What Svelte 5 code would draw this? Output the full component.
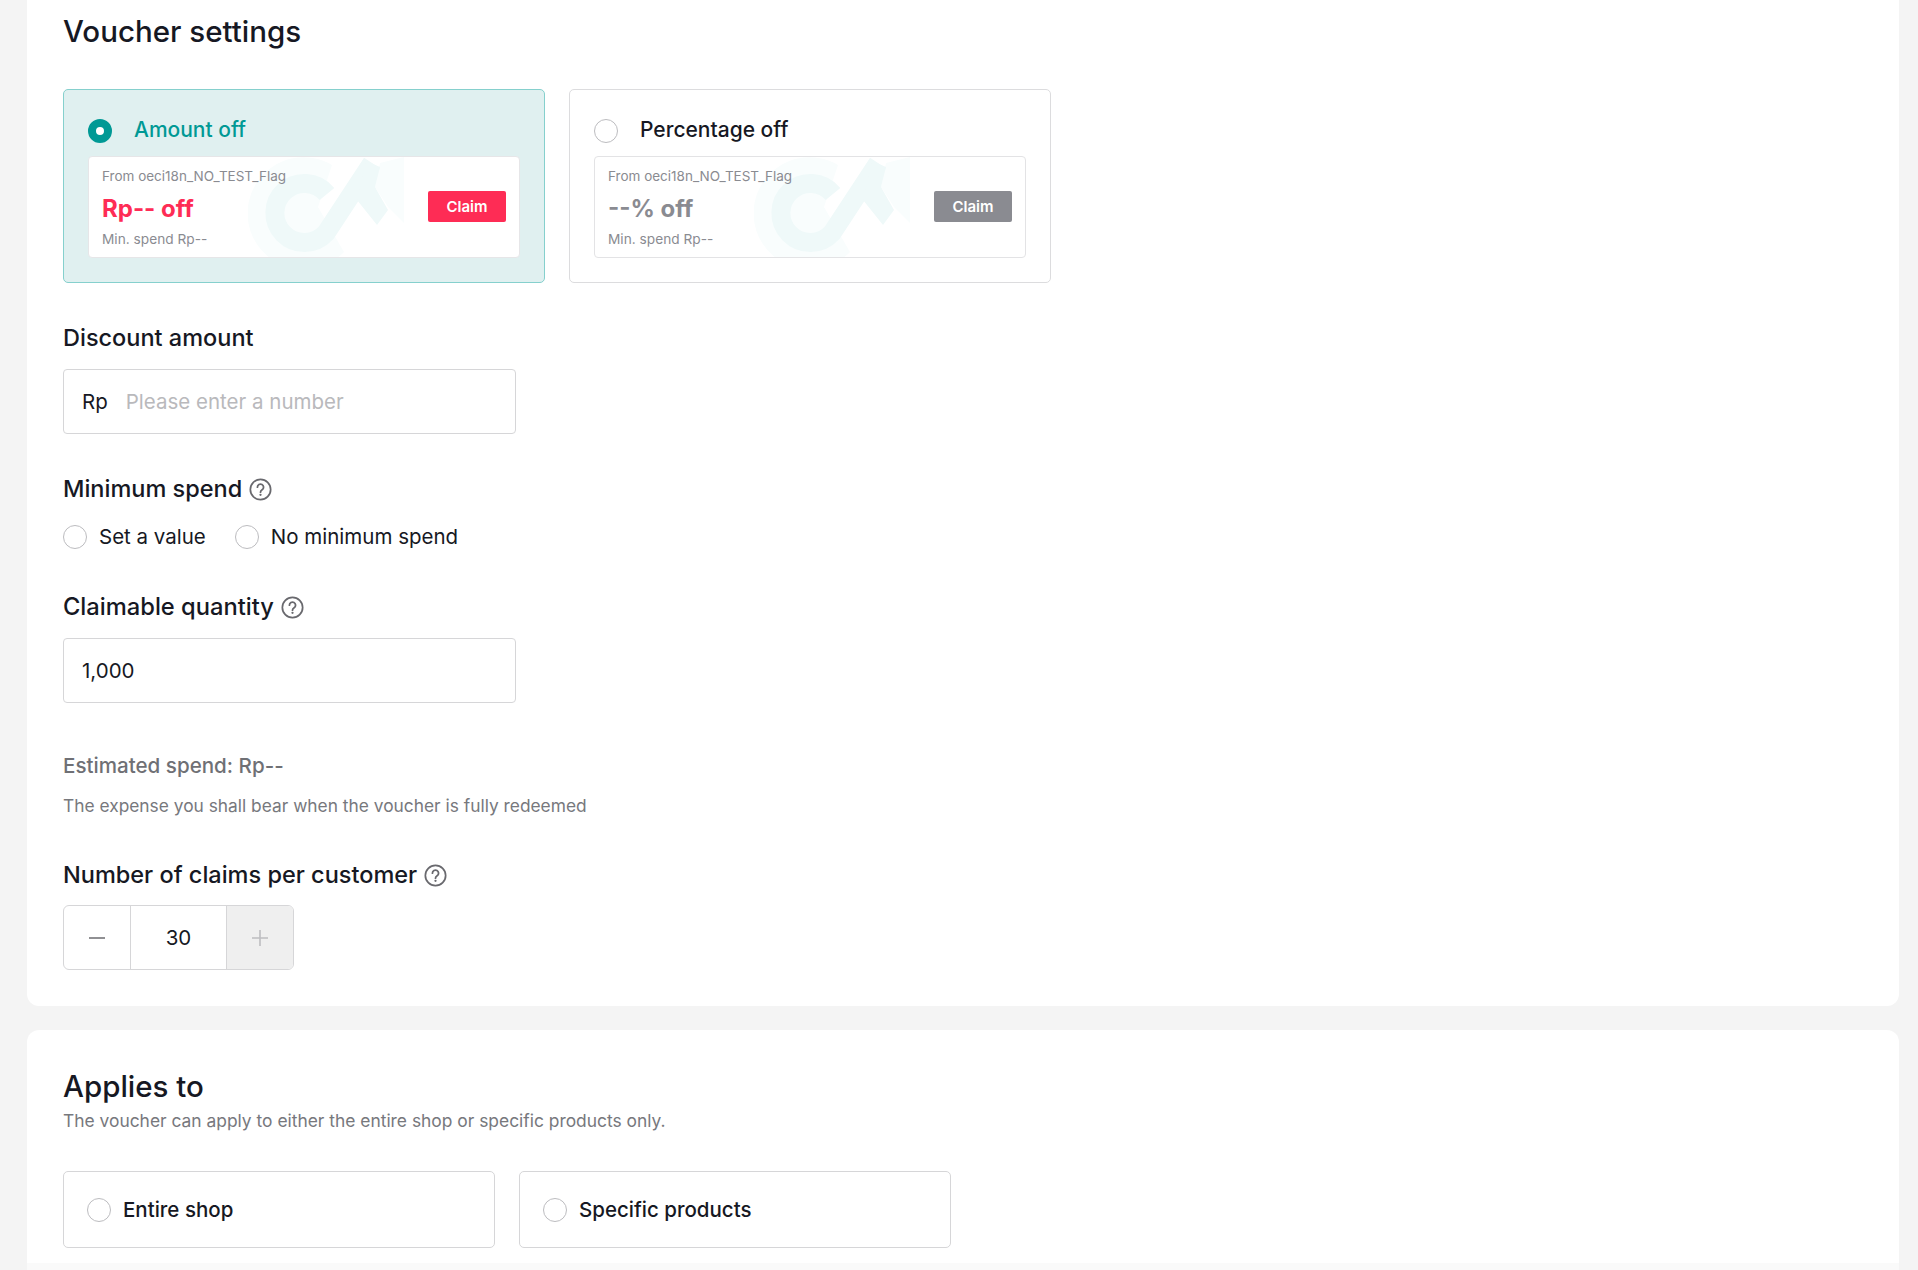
<script>
	let voucherType = $state('amount');
	let minSpend = $state('');
	let appliesTo = $state('');
	let claims = $state(30);

	const voucherTypes = [
		{ id: 'amount', label: 'Amount off', value: 'Rp-- off' },
		{ id: 'percent', label: 'Percentage off', value: '--% off' }
	];
</script>

{#snippet help()}
	<svg class="help" viewBox="0 0 24 24" fill="none" stroke="#69696e" aria-hidden="true">
		<circle cx="12" cy="12" r="10.6" stroke-width="1.8" />
		<path d="M8.8 9.6a3.2 3.2 0 1 1 4.9 2.7c-1.1.7-1.7 1.3-1.7 2.5" stroke-width="1.9" stroke-linecap="round" />
		<circle cx="12" cy="17.6" r="1.2" fill="#69696e" stroke="none" />
	</svg>
{/snippet}

{#snippet watermark()}
	<svg class="watermark" viewBox="0 0 160 102" aria-hidden="true">
		<path d="M84 8A56 56 0 1 0 96 95L70 50z" fill="#f9fdfd" />
		<path d="M132 6 156 0V66L140 50 127 30z" fill="#f9fdfd" />
		<path d="M79 37A29.5 29.5 0 1 0 78 76L124 6" fill="none" stroke="#eff9f9" stroke-width="19" />
		<path d="M109 43 129 68 140 53 127 30 132 10 118 4z" fill="#eff9f9" />
	</svg>
{/snippet}

<div class="page">
	<section class="card first">
		<h2 class="title">Voucher settings</h2>

		<div class="type-row">
			{#each voucherTypes as t}
				<button class="type" class:active={voucherType === t.id} onclick={() => (voucherType = t.id)}>
					<span class="type-head">
						<span class="radio big" class:on={voucherType === t.id}></span>
						<span class="type-label">{t.label}</span>
					</span>
					<span class="coupon">
						{@render watermark()}
						<span class="coupon-text">
							<span class="from">From oeci18n_NO_TEST_Flag</span>
							<span class="value">{t.value}</span>
							<span class="min">Min. spend Rp--</span>
						</span>
						<span class="claim">Claim</span>
					</span>
				</button>
			{/each}
		</div>

		<div class="label discount">Discount amount</div>
		<div class="input">
			<span class="prefix">Rp</span>
			<span class="placeholder">Please enter a number</span>
		</div>

		<div class="label min-label">Minimum spend {@render help()}</div>
		<div class="radios">
			<button class="choice" onclick={() => (minSpend = 'value')}>
				<span class="radio" class:on={minSpend === 'value'}></span>Set a value
			</button>
			<button class="choice" onclick={() => (minSpend = 'none')}>
				<span class="radio" class:on={minSpend === 'none'}></span>No minimum spend
			</button>
		</div>

		<div class="label qty-label">Claimable quantity {@render help()}</div>
		<div class="input"><span class="prefix">1,000</span></div>

		<div class="estimate">Estimated spend: Rp--</div>
		<div class="note">The expense you shall bear when the voucher is fully redeemed</div>

		<div class="label claims-label">Number of claims per customer {@render help()}</div>
		<div class="stepper">
			<button class="step minus" aria-label="Decrease" onclick={() => (claims = claims - 1)}>
				<svg viewBox="0 0 18 18" width="18" height="18"><path d="M1 9h16" stroke="#6b6b6f" stroke-width="1.6" /></svg>
			</button>
			<span class="count">{claims}</span>
			<button class="step plus" aria-label="Increase">
				<svg viewBox="0 0 18 18" width="18" height="18"><path d="M1 9h16M9 1v16" stroke="#bdbdc0" stroke-width="1.6" /></svg>
			</button>
		</div>
	</section>

	<section class="card second">
		<h2 class="title">Applies to</h2>
		<p class="sub">The voucher can apply to either the entire shop or specific products only.</p>
		<div class="apply-row">
			<button class="apply" onclick={() => (appliesTo = 'shop')}>
				<span class="radio" class:on={appliesTo === 'shop'}></span>Entire shop
			</button>
			<button class="apply" onclick={() => (appliesTo = 'products')}>
				<span class="radio" class:on={appliesTo === 'products'}></span>Specific products
			</button>
		</div>
	</section>
</div>

<style>
	:global(body) {
		background: #f4f4f4;
		overflow: hidden;
	}

	.page {
		height: 1270px;
		padding: 0 19px 0 27px;
		box-sizing: border-box;
		overflow: hidden;
		font-family: Inter, "Liberation Sans", sans-serif;
		color: #161823;
	}

	button {
		font: inherit;
		color: inherit;
		background: none;
		border: 0;
		padding: 0;
		cursor: pointer;
		text-align: left;
	}

	.card {
		background: #fff;
		padding: 0 36px;
		box-sizing: border-box;
	}

	.first {
		height: 1006px;
		border-radius: 0 0 12px 12px;
		padding-top: 13px;
	}

	.second {
		height: 240px;
		margin-top: 24px;
		border-radius: 12px 12px 0 0;
		padding-top: 38px;
		background: linear-gradient(#fff calc(100% - 7px), #fafafa calc(100% - 7px));
	}

	.title {
		margin: 0;
		font-size: 29.5px;
		line-height: 36px;
		font-weight: 500;
	}

	.type-row {
		display: flex;
		gap: 24px;
		margin-top: 40px;
	}

	.type {
		width: 482px;
		height: 194px;
		box-sizing: border-box;
		border: 1px solid #dcdcde;
		border-radius: 5px;
		padding: 24px;
		display: block;
	}

	.type.active {
		background: #e0f0f0;
		border-color: #85d0cd;
	}

	.type-head {
		display: flex;
		align-items: center;
		height: 36px;
		margin-top: -2px;
		font-size: 21px;
		font-weight: 500;
	}

	.type-label {
		margin-left: 22px;
		margin-top: -2px;
	}

	.active .type-label {
		color: #009995;
	}

	.coupon {
		position: relative;
		display: flex;
		align-items: center;
		justify-content: space-between;
		height: 102px;
		margin-top: 7px;
		padding: 0 13px;
		box-sizing: border-box;
		background: #fff;
		border: 1px solid #e3e3e5;
		border-radius: 4px;
		overflow: hidden;
	}

	.active .coupon {
		border-color: #e6e6e8;
	}

	.watermark {
		position: absolute;
		left: 159px;
		top: 0;
		width: 160px;
		height: 102px;
	}

	.coupon-text {
		position: relative;
		display: flex;
		flex-direction: column;
		margin-top: 2px;
	}

	.from,
	.min {
		font-size: 13.7px;
		line-height: 20px;
		color: #8a8b91;
	}

	.from {
		font-size: 13.5px;
	}

	.value {
		font-size: 24px;
		line-height: 32px;
		margin: 7px 0 4px;
		font-weight: 700;
		color: #8a8b91;
	}

	.active .value {
		color: #fe2c55;
	}

	.claim {
		position: relative;
		width: 78px;
		height: 31px;
		line-height: 31px;
		text-align: center;
		border-radius: 2px;
		background: #8a8b91;
		color: #fff;
		font-size: 15px;
		font-weight: 600;
	}

	.active .claim {
		background: #fe2c55;
	}

	.radio {
		flex: none;
		display: inline-block;
		width: 24px;
		height: 24px;
		box-sizing: border-box;
		border: 1px solid #bcbcbf;
		border-radius: 50%;
		background: #fff;
	}

	.radio.on {
		border: 8px solid #009995;
	}

	.label {
		display: flex;
		align-items: center;
		gap: 7px;
		font-size: 23.5px;
		line-height: 32px;
		font-weight: 500;
	}

	.help {
		width: 23px;
		height: 23px;
	}

	.discount {
		margin-top: 39px;
	}

	.input {
		display: flex;
		align-items: center;
		width: 453px;
		height: 65px;
		box-sizing: border-box;
		margin-top: 15px;
		padding: 0 18px;
		border: 1px solid #d6d6d8;
		border-radius: 4px;
		font-size: 20.5px;
	}

	.placeholder {
		margin-left: 18px;
		color: #b9b9bc;
	}

	.min-label {
		margin-top: 39px;
	}

	.radios {
		display: flex;
		gap: 29px;
		margin-top: 16px;
	}

	.choice,
	.apply {
		display: flex;
		align-items: center;
		font-size: 20.5px;
		line-height: 32px;
	}

	.choice .radio {
		margin-right: 12px;
	}

	.qty-label {
		margin-top: 38px;
		font-size: 23.7px;
	}

	.estimate {
		margin-top: 47px;
		font-size: 20.6px;
		line-height: 32px;
		font-weight: 500;
		color: #6f7075;
	}

	.note {
		margin-top: 8px;
		font-size: 17.35px;
		line-height: 32px;
		color: #77787d;
	}

	.claims-label {
		margin-top: 37px;
	}

	.stepper {
		display: flex;
		width: 231px;
		height: 65px;
		box-sizing: border-box;
		margin-top: 14px;
		border: 1px solid #d6d6d8;
		border-radius: 6px;
		overflow: hidden;
	}

	.step {
		display: flex;
		align-items: center;
		justify-content: center;
	}

	.minus {
		width: 67px;
		border-right: 1px solid #d6d6d8;
	}

	.count {
		width: 95px;
		line-height: 63px;
		text-align: center;
		font-size: 20.5px;
	}

	.plus {
		flex: 1;
		background: #efefef;
		border-left: 1px solid #d6d6d8;
	}

	.sub {
		margin: 5px 0 0;
		font-size: 17.4px;
		line-height: 24px;
		color: #77787d;
	}

	.apply-row {
		display: flex;
		gap: 24px;
		margin-top: 38px;
	}

	.apply {
		width: 432px;
		height: 77px;
		box-sizing: border-box;
		padding-left: 23px;
		border: 1px solid #d6d6d8;
		border-radius: 5px;
		font-weight: 500;
	}

	.apply .radio {
		margin-right: 12px;
	}
</style>
